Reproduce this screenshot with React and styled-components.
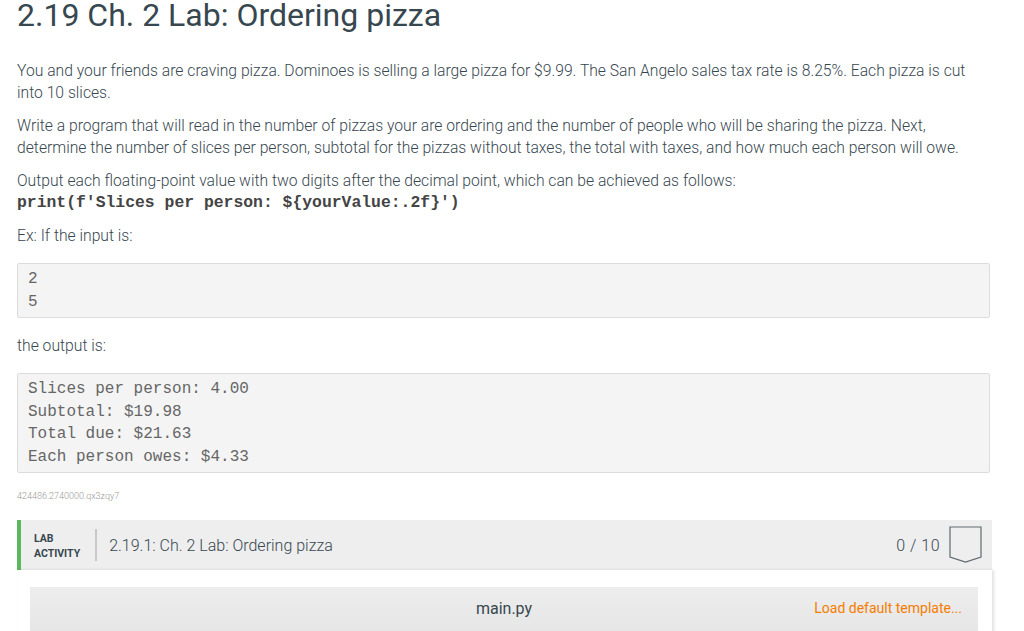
import styled, { createGlobalStyle } from "styled-components";

const GlobalStyle = createGlobalStyle`
  body {
    margin: 0;
    background: #fff;
    font-family: Roboto, "Liberation Sans", sans-serif;
    color: #37474f;
    overflow: hidden;
  }
`;

const Page = styled.div`
  padding: 0 34px 0 17px;
  width: 973px;
  height: 631px;
  overflow: hidden;
`;

const Title = styled.h1`
  margin: 0;
  font-size: 32px;
  font-weight: 400;
  line-height: 30px;
  color: #37474f;
`;

const Para = styled.p`
  margin: 30px 0 0;
  font-size: 15.7px;
  font-weight: 300;
  line-height: 22px;
  color: #37474f;
  & + & {
    margin-top: 11px;
  }
`;

const InlineCode = styled.code`
  display: block;
  font-family: "Liberation Mono", monospace;
  font-weight: 700;
  font-size: 16.4px;
  color: #444;
`;

const CodeBox = styled.pre`
  margin: 16px 0 0;
  padding: 4px 10px;
  background: #f4f4f4;
  border: 1px solid #dcdcdc;
  border-radius: 2px;
  font-family: "Liberation Mono", monospace;
  font-size: 16px;
  line-height: 22.5px;
  color: #666;
  & + ${Para} {
    margin-top: 17px;
  }
`;

const Hash = styled.div`
  margin-top: 17px;
  font-size: 9px;
  line-height: 12px;
  font-weight: 300;
  color: #999;
`;

const ActivityBar = styled.div`
  margin-top: 18px;
  width: 975px;
  display: flex;
  align-items: center;
  height: 50px;
  background: #eeeeee;
  border-left: 4px solid #5cb85c;
  box-sizing: border-box;
`;

const Label = styled.div`
  font-size: 10.5px;
  font-weight: 700;
  line-height: 15px;
  color: #37474f;
  padding: 0 15px 0 13px;
  margin-top: 1px;
`;

const Divider = styled.div`
  width: 2px;
  height: 32px;
  background: #c8c8c8;
`;

const ActTitle = styled.div`
  flex: 1;
  padding-left: 12px;
  font-size: 16px;
  font-weight: 300;
  color: #37474f;
`;

const Score = styled.div`
  font-size: 16px;
  font-weight: 300;
  color: #37474f;
  margin-right: 9px;
  letter-spacing: 0.5px;
`;

const Badge = styled.svg`
  width: 33px;
  height: 38px;
  margin-right: 10px;
  margin-bottom: 1px;
`;

const Body = styled.div`
  width: 975px;
  background: #fff;
  box-shadow: 2px 0 3px rgba(0, 0, 0, 0.12);
  padding: 17px 14px 0 13px;
  box-sizing: border-box;
  height: 80px;
`;

const EditorHeader = styled.div`
  height: 46px;
  background: linear-gradient(#ededed, #e6e6e6);
  display: grid;
  grid-template-columns: 1fr auto 1fr;
  align-items: start;
  padding-top: 12px;
  box-sizing: border-box;
`;

const FileName = styled.div`
  font-size: 16px;
  font-weight: 400;
  color: #37474f;
  grid-column: 2;
`;

const LoadLink = styled.a`
  justify-self: end;
  margin-right: 16px;
  margin-top: 1px;
  font-size: 14px;
  font-weight: 400;
  color: #f57c00;
  cursor: pointer;
`;

export default function App() {
  return (
    <>
      <GlobalStyle />
      <Page>
        <Title>2.19 Ch. 2 Lab: Ordering pizza</Title>
        <Para>
          You and your friends are craving pizza. Dominoes is selling a large pizza for $9.99. The San Angelo sales tax rate is 8.25%. Each pizza is cut into 10 slices.
        </Para>
        <Para>
          Write a program that will read in the number of pizzas your are ordering and the number of people who will be sharing the pizza. Next, determine the number of slices per person, subtotal for the pizzas without taxes, the total with taxes, and how much each person will owe.
        </Para>
        <Para>
          Output each floating-point value with two digits after the decimal point, which can be achieved as follows:
          <InlineCode>print(f'Slices per person: ${"{yourValue:.2f}"}')</InlineCode>
        </Para>
        <Para>Ex: If the input is:</Para>
        <CodeBox>{"2\n5"}</CodeBox>
        <Para>the output is:</Para>
        <CodeBox>
          {"Slices per person: 4.00\nSubtotal: $19.98\nTotal due: $21.63\nEach person owes: $4.33"}
        </CodeBox>
        <Hash>424486.2740000.qx3zqy7</Hash>
        <ActivityBar>
          <Label>LAB<br />ACTIVITY</Label>
          <Divider />
          <ActTitle>2.19.1: Ch. 2 Lab: Ordering pizza</ActTitle>
          <Score>0 / 10</Score>
          <Badge viewBox="0 0 33 38">
            <path d="M1 1 H32 V31 L16.5 36 L1 31 Z" fill="none" stroke="#5f6b70" strokeWidth="1.2" />
          </Badge>
        </ActivityBar>
        <Body>
          <EditorHeader>
            <FileName>main.py</FileName>
            <LoadLink>Load default template...</LoadLink>
          </EditorHeader>
        </Body>
      </Page>
    </>
  );
}
